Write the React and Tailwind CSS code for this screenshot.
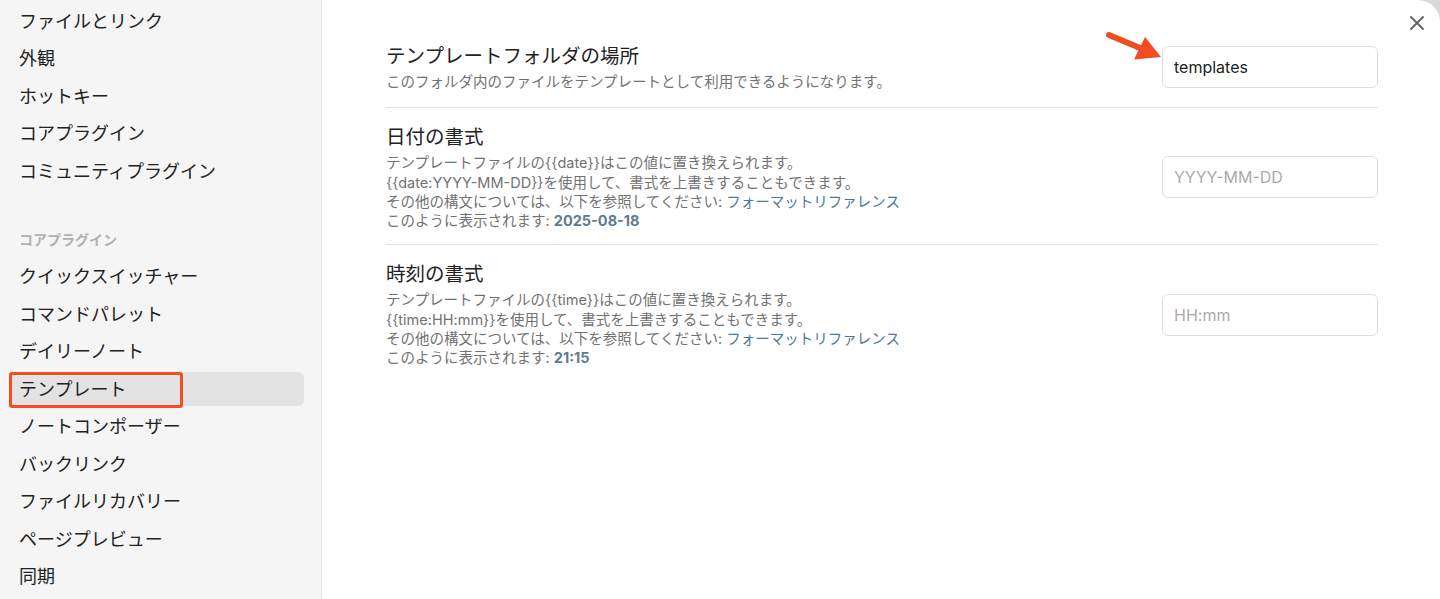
import { X } from "lucide-react";

const font = { fontFamily: '"Inter", "Noto Sans CJK JP", sans-serif' };

const topItems = ["ファイルとリンク", "外観", "ホットキー", "コアプラグイン", "コミュニティプラグイン"];
const pluginItems = [
  "クイックスイッチャー",
  "コマンドパレット",
  "デイリーノート",
  "テンプレート",
  "ノートコンポーザー",
  "バックリンク",
  "ファイルリカバリー",
  "ページプレビュー",
  "同期",
];

function NavItem({ label, active }) {
  return (
    <div
      className={
        "relative flex h-[34px] shrink-0 items-center rounded-[6px] pl-[10px] text-[18px] text-[#222222] " +
        (active ? "bg-[#e3e3e3]" : "")
      }
    >
      {label}
      {active && (
        <div className="absolute left-0 top-0 h-[36px] w-[174px] rounded-[3px] border-[3px] border-[#f24e23]" />
      )}
    </div>
  );
}

function Arrow() {
  return (
    <svg className="absolute left-[-62px] top-[-18px]" width="66" height="38" viewBox="0 0 66 38">
      <line x1="9" y1="7" x2="40" y2="20" stroke="#f04e22" strokeWidth="6" strokeLinecap="round" />
      <polygon points="61,29 34,31.5 45,9" fill="#f04e22" />
    </svg>
  );
}

function Setting({ title, children, placeholder, value, first, arrow }) {
  return (
    <div
      className={
        "flex items-center " +
        (first ? "pb-[16px] pt-[17px]" : "border-t border-[#e3e3e3] pb-[14px] pt-[16px]")
      }
    >
      <div className="flex-1">
        <div className="text-[19.5px] leading-[26px] text-[#222222]">{title}</div>
        <div className="mt-[3px] text-[14.5px] leading-[19.3px] text-[#727272]">{children}</div>
      </div>
      <div className="relative">
        {arrow && <Arrow />}
        <input
          readOnly
          value={value || ""}
          placeholder={placeholder}
          className="h-[42px] w-[216px] rounded-[6px] border border-[#dedede] bg-white px-[11px] text-[16px] text-[#222222] outline-none placeholder:text-[#ababab]"
          style={font}
        />
      </div>
    </div>
  );
}

const Link = ({ children }) => <span className="text-[#4e7899]">{children}</span>;
const Bold = ({ children }) => <span className="font-bold text-[#5a7c94]">{children}</span>;

export default function App() {
  return (
    <div className="h-[599px] w-full overflow-hidden bg-[#d8d8d8]" style={font}>
      <div className="flex h-full overflow-hidden rounded-tr-[22px] bg-white">
        <aside className="w-[322px] shrink-0 border-r border-[#e4e4e4] bg-[#f5f5f5] pl-[9px] pr-[17px] pt-[4px]">
          <div className="flex flex-col gap-[3.5px]">
            {topItems.map((t) => (
              <NavItem key={t} label={t} />
            ))}
          </div>
          <div className="mb-[9.5px] mt-[42px] pl-[10px] text-[14px] font-semibold leading-[20px] text-[#b1b1b1]">
            コアプラグイン
          </div>
          <div className="flex flex-col gap-[3.5px]">
            {pluginItems.map((t) => (
              <NavItem key={t} label={t} active={t === "テンプレート"} />
            ))}
          </div>
        </aside>

        <main className="relative flex-1 pl-[64px] pr-[62px] pt-[26px]">
          <button className="absolute right-[11px] top-[11px] flex h-[24px] w-[24px] items-center justify-center text-[#666666]">
            <X size={24} strokeWidth={2} />
          </button>

          <Setting first arrow title="テンプレートフォルダの場所" value="templates">
            このフォルダ内のファイルをテンプレートとして利用できるようになります。
          </Setting>

          <Setting title="日付の書式" placeholder="YYYY-MM-DD">
            <div>テンプレートファイルの{"{{date}}"}はこの値に置き換えられます。</div>
            <div>{"{{date:YYYY-MM-DD}}"}を使用して、書式を上書きすることもできます。</div>
            <div>
              その他の構文については、以下を参照してください: <Link>フォーマットリファレンス</Link>
            </div>
            <div>
              このように表示されます: <Bold>2025-08-18</Bold>
            </div>
          </Setting>

          <Setting title="時刻の書式" placeholder="HH:mm">
            <div>テンプレートファイルの{"{{time}}"}はこの値に置き換えられます。</div>
            <div>{"{{time:HH:mm}}"}を使用して、書式を上書きすることもできます。</div>
            <div>
              その他の構文については、以下を参照してください: <Link>フォーマットリファレンス</Link>
            </div>
            <div>
              このように表示されます: <Bold>21:15</Bold>
            </div>
          </Setting>
        </main>
      </div>
    </div>
  );
}
